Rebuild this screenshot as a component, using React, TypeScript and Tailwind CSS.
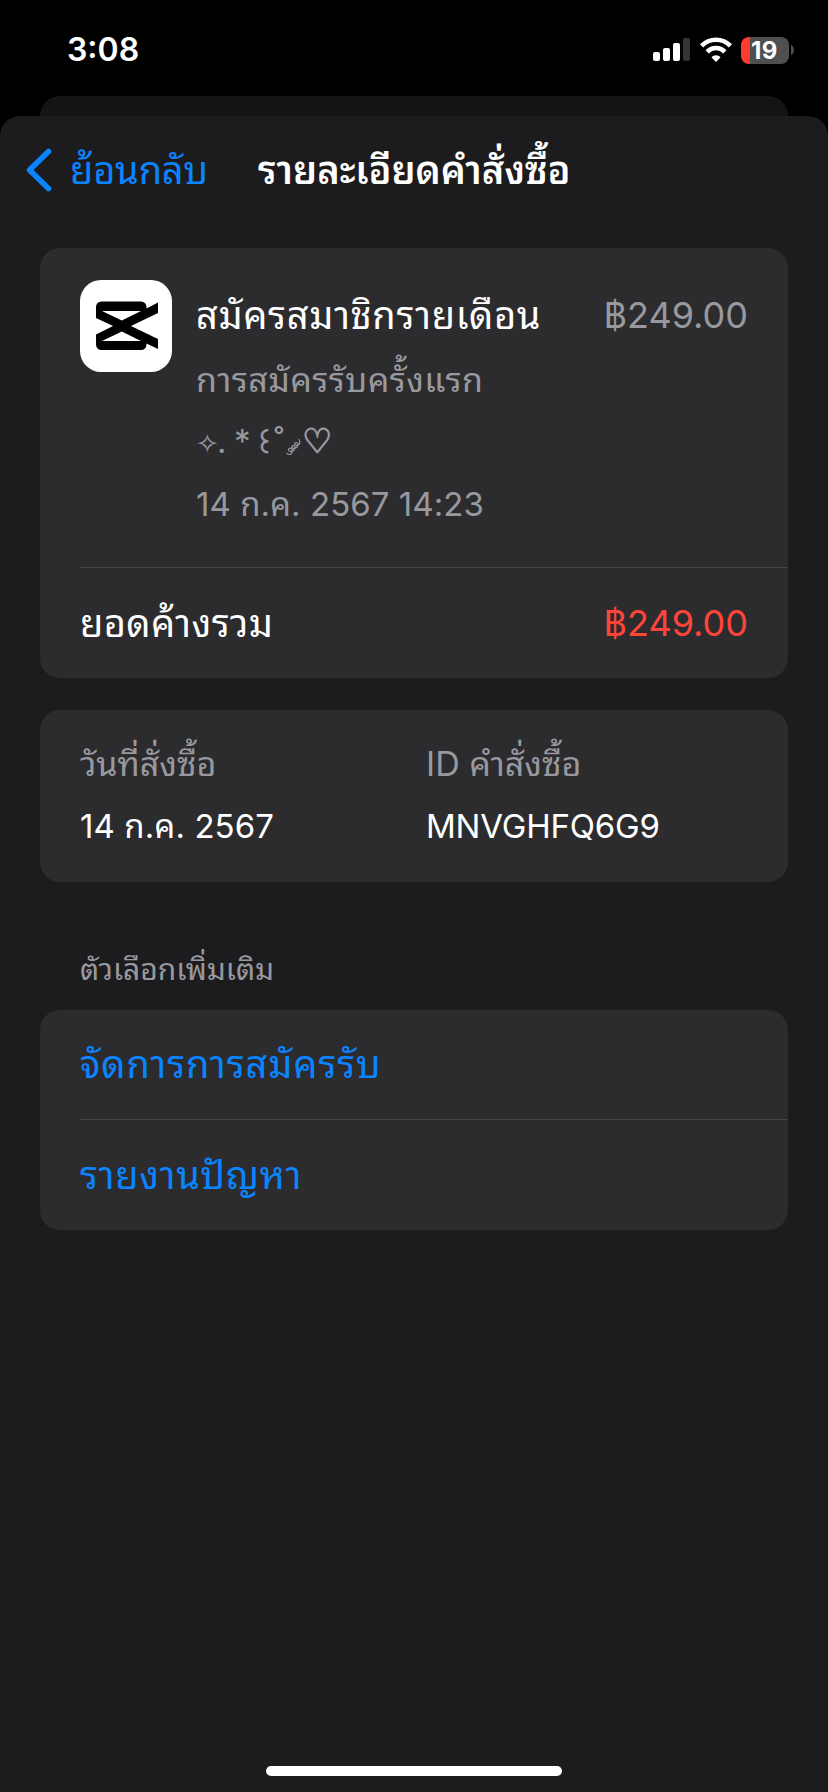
import type { ReactNode } from "react";

function StatusBar() {
  return (
    <header className="flex h-24 shrink-0 items-center justify-between pt-[4px] pr-[34px] pl-[67px]">
      <span className="text-[32px] leading-[40px] font-semibold text-white">3:08</span>
      <div className="flex items-center">
        <svg width="38" height="24" viewBox="0 0 38 24" className="mr-[8px]">
          <rect x="0" y="14" width="7" height="9" rx="2" fill="#fff" />
          <rect x="10" y="10" width="7" height="13" rx="2" fill="#fff" />
          <rect x="20" y="5" width="7" height="18" rx="2" fill="#fff" />
          <rect x="30" y="0" width="7" height="23" rx="2" fill="#353535" />
        </svg>
        <svg width="34" height="26" viewBox="0 0 34 26" className="mr-[8px]">
          <path d="M2.6 8.9a20 20 0 0 1 28.8 0" fill="none" stroke="#fff" strokeWidth="4.6" />
          <path d="M8.2 14.8a12.2 12.2 0 0 1 17.6 0" fill="none" stroke="#fff" strokeWidth="4.6" />
          <path d="M17 25l-4.6-4.8a6.500 6.500 0 0 1 9.2 0z" fill="#fff" />
        </svg>
        <div className="flex h-[27px] w-[48px] items-center overflow-hidden rounded-[8px] bg-[linear-gradient(90deg,#ff3b30_9px,#4f4f4f_9px)] pl-[10px]">
          <span className="text-[24px] leading-[27px] font-bold tracking-[0.5px] text-white">19</span>
        </div>
        <svg width="3" height="10" viewBox="0 0 3 10" className="ml-[2px]">
          <path d="M0 0c4 1.5 4 8.500 0 10z" fill="#4f4f4f" />
        </svg>
      </div>
    </header>
  );
}

function AppIcon() {
  return (
    <svg width="92" height="92" viewBox="0 0 92 92" className="mt-[-1px] shrink-0">
      <rect width="92" height="92" rx="21" fill="#fff" />
      <path d="M66.500 28.500V27a5.500 5.500 0 0 0-5.500-5.500H21.500A5.500 5.500 0 0 0 16 27v11l17 8-17 8.500v10a5.500 5.500 0 0 0 5.500 5.500H61a5.500 5.500 0 0 0 5.500-5.500V63.500L78 69V59L51 46l27-13V22.500zM22 31h39L41.800 40.600zM22 61l19.800-9.600L61 61z" fill="#000" fillRule="evenodd" />
    </svg>
  );
}

function Doodle() {
  return (
    <p className="flex h-[60px] items-baseline leading-[60px]">
      <span className="w-[21px] text-[27px]">✧</span>
      <span className="w-[17px]">.</span>
      <span className="w-[20px]">*</span>
      <span className="w-[20px] text-[27px] [-webkit-text-stroke:1px_#98989f]">꒰</span>
      <span className="w-[12px]">˚</span>
      <svg width="16" height="18" viewBox="0 0 16 18" className="translate-y-[3px]">
        <path d="M1 15.500c3 2.500 6.500-.5 5-4-1-2-3.800-1.500-3.500.5.500 2.500 6.500 1.500 6.500-2.500 0-2.500-3.500-2.500-3.300-.3.300 2.300 6.300 1.300 6.300-2.700 0-2.500-3.500-2.500-3.300-.3.300 2.500 7.300 1.300 4.300-4.700" fill="none" stroke="#98989f" strokeWidth="1.2" strokeLinecap="round" />
      </svg>
      <span className="font-['DejaVu_Sans'] text-[34px] leading-[60px] [-webkit-text-stroke:1.2px_#98989f]">♡</span>
    </p>
  );
}

function Card({ children, className = "" }: { children: ReactNode; className?: string }) {
  return <section className={`rounded-[20px] bg-[#2c2c2e] ${className}`}>{children}</section>;
}

export default function App() {
  return (
    <div className="flex h-[1792px] w-[828px] flex-col bg-black font-[Inter,Thonburi,'Noto_Sans_Thai_Looped','Noto_Looped_Thai',Loma,Garuda,Waree,'Noto_Sans_Thai','Noto_Sans',sans-serif] whitespace-nowrap text-white">
      <StatusBar />
      <div className="mx-10 h-5 shrink-0 rounded-t-[20px] bg-[#141414]" />
      <main className="flex grow flex-col rounded-t-[20px] bg-[#1c1c1e] px-10">
        <nav className="mb-6 flex h-[108px] items-center">
          <svg width="26" height="44" viewBox="0 0 26 44" className="-ml-[14px]">
            <path d="M22.500 3.500L3.500 22l19 18.500" fill="none" stroke="#0a84ff" strokeWidth="5.5" strokeLinecap="round" strokeLinejoin="round" />
          </svg>
          <a className="ml-[18px] w-[188px] text-[38px] leading-[60px] tracking-[-0.2px] text-[#0a84ff]">ย้อนกลับ</a>
          <h1 className="text-[38px] leading-[60px] font-semibold">รายละเอียดคำสั่งซื้อ</h1>
        </nav>

        <Card className="pt-[33px]">
          <div className="flex px-10 pb-[30px]">
            <AppIcon />
            <div className="ml-6 grow text-[33px] text-[#98989f]">
              <div className="flex justify-between text-[36px] leading-[68px]">
                <span className="text-[38px] tracking-[0.65px] text-white">สมัครสมาชิกรายเดือน</span>
                <span>฿249.00</span>
              </div>
              <p className="text-[34px] leading-[62px] tracking-[0.45px]">การสมัครรับครั้งแรก</p>
              <Doodle />
              <p className="leading-[66px] tracking-[0.05px]">14 ก.ค. 2567 14:23</p>
            </div>
          </div>
          <div className="ml-10 h-px bg-[#464649]" />
          <div className="flex h-[110px] items-center justify-between px-10 text-[36px]">
            <span className="text-[38px] tracking-[0.4px]">ยอดค้างรวม</span>
            <span className="text-[#ff453a]">฿249.00</span>
          </div>
        </Card>

        <Card className="mt-8 flex px-10 pt-[23px] pb-[25px] text-[33px] leading-[62px]">
          <div className="w-[346px]">
            <p className="text-[34px] text-[#98989f]">วันที่สั่งซื้อ</p>
            <p className="tracking-[0.1px]">14 ก.ค. 2567</p>
          </div>
          <div>
            <p className="text-[34px] text-[#98989f]">ID คำสั่งซื้อ</p>
            <p className="tracking-[-0.2px]">MNVGHFQ6G9</p>
          </div>
        </Card>

        <h2 className="mt-[67px] mb-[21px] pl-10 text-[30px] leading-[40px] text-[#98989f]">ตัวเลือกเพิ่มเติม</h2>
        <Card className="text-[38px] text-[#0a84ff]">
          <a className="flex h-[109px] items-center px-10 tracking-[0.9px]">จัดการการสมัครรับ</a>
          <div className="ml-10 h-px bg-[#464649]" />
          <a className="flex h-[110px] items-center px-10 tracking-[0.65px]">รายงานปัญหา</a>
        </Card>
        <div className="mx-auto mt-auto mb-4 h-[10px] w-[296px] rounded-full bg-white" />
      </main>
    </div>
  );
}
